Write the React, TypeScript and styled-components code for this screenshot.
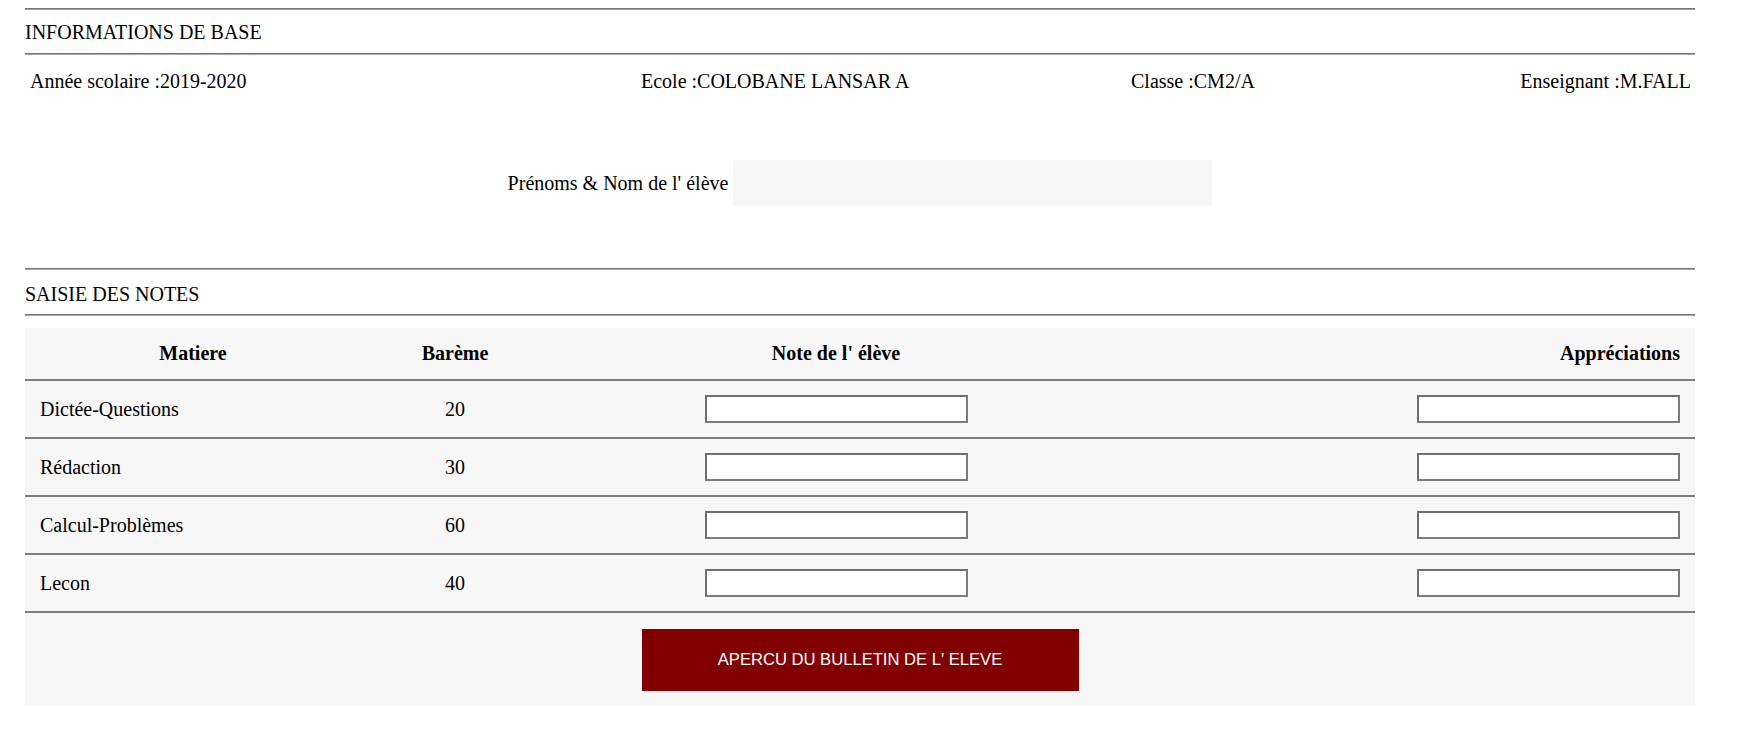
import React from "react";
import styled, { createGlobalStyle } from "styled-components";

const GlobalStyle = createGlobalStyle`
  html, body {
    margin: 0;
    padding: 0;
    background: #ffffff;
  }
  body {
    font-family: "Liberation Serif", "Times New Roman", serif;
    font-size: 20px;
    color: #000000;
  }
`;

const Page = styled.div`
  padding: 8px 46px 0 25px;
`;

const Divider = styled.div`
  height: 0;
  border-top: 1px solid #747474;
  border-bottom: 1px solid #a9a9a9;
`;

const SectionTitle = styled.div<{ $top?: number; $bottom?: number }>`
  padding: ${(p) => p.$top ?? 11}px 0 ${(p) => p.$bottom ?? 9}px 0;
  line-height: 23px;
`;

const InfoRow = styled.div`
  display: grid;
  grid-template-columns: 611px 490px 1fr 1fr;
  margin-top: 15px;
  padding: 0 4px 0 5px;
  line-height: 23px;
`;

const InfoItem = styled.span<{ $end?: boolean }>`
  justify-self: ${(p) => (p.$end ? "end" : "start")};
  white-space: nowrap;
`;

const NameRow = styled.div`
  display: flex;
  justify-content: center;
  align-items: center;
  gap: 5px;
  margin-top: 67px;
  margin-bottom: 62px;
`;

const NameLabel = styled.label`
  line-height: 23px;
`;

const NameInput = styled.input`
  width: 479px;
  height: 46px;
  box-sizing: border-box;
  border: none;
  background: #f7f7f7;
  outline: none;
  font: inherit;
`;

const Table = styled.div`
  margin-top: 12px;
  background: #f7f7f7;
`;

const Row = styled.div<{ $head?: boolean }>`
  display: grid;
  grid-template-columns: 306px 218px 544px 1fr;
  align-items: center;
  height: ${(p) => (p.$head ? "51px" : "56px")};
  padding: 0 15px;
  border-bottom: 2px solid #7c7c7c;
  font-weight: ${(p) => (p.$head ? 700 : 400)};
  line-height: 23px;
`;

const Cell = styled.div<{ $align?: "left" | "center" | "right" }>`
  display: flex;
  justify-content: ${(p) =>
    p.$align === "center" ? "center" : p.$align === "right" ? "flex-end" : "flex-start"};
  white-space: nowrap;
`;

const GradeInput = styled.input`
  width: 263px;
  height: 28px;
  box-sizing: border-box;
  border: 2px solid #7b7b7b;
  border-top-color: #6f6f6f;
  border-left-color: #6f6f6f;
  background: #ffffff;
  padding: 1px 2px;
  font-family: "Liberation Sans", Arial, sans-serif;
  font-size: 16px;
  outline: none;
`;

const Footer = styled.div`
  display: flex;
  justify-content: center;
  padding: 16px 0 15px 0;
`;

const PreviewButton = styled.button`
  width: 437px;
  height: 62px;
  border: none;
  background: #800000;
  color: #ffffff;
  font-family: "Liberation Sans", Arial, sans-serif;
  font-size: 16.6px;
  cursor: pointer;
`;

const subjects = [
  { name: "Dictée-Questions", bareme: 20 },
  { name: "Rédaction", bareme: 30 },
  { name: "Calcul-Problèmes", bareme: 60 },
  { name: "Lecon", bareme: 40 },
];

export default function App() {
  return (
    <>
      <GlobalStyle />
      <Page>
        <Divider />
        <SectionTitle>INFORMATIONS DE BASE</SectionTitle>
        <Divider />
        <InfoRow>
          <InfoItem>Année scolaire :2019-2020</InfoItem>
          <InfoItem>Ecole :COLOBANE LANSAR A</InfoItem>
          <InfoItem>Classe :CM2/A</InfoItem>
          <InfoItem $end>Enseignant :M.FALL</InfoItem>
        </InfoRow>
        <NameRow>
          <NameLabel>Prénoms &amp; Nom de l' élève</NameLabel>
          <NameInput type="text" />
        </NameRow>
        <Divider />
        <SectionTitle $top={13} $bottom={8}>
          SAISIE DES NOTES
        </SectionTitle>
        <Divider />
        <Table>
          <Row $head>
            <Cell $align="center">Matiere</Cell>
            <Cell $align="center">Barème</Cell>
            <Cell $align="center">Note de l' élève</Cell>
            <Cell $align="right">Appréciations</Cell>
          </Row>
          {subjects.map((s) => (
            <Row key={s.name}>
              <Cell>{s.name}</Cell>
              <Cell $align="center">{s.bareme}</Cell>
              <Cell $align="center">
                <GradeInput type="text" />
              </Cell>
              <Cell $align="right">
                <GradeInput type="text" />
              </Cell>
            </Row>
          ))}
          <Footer>
            <PreviewButton type="button">APERCU DU BULLETIN DE L' ELEVE</PreviewButton>
          </Footer>
        </Table>
      </Page>
    </>
  );
}
